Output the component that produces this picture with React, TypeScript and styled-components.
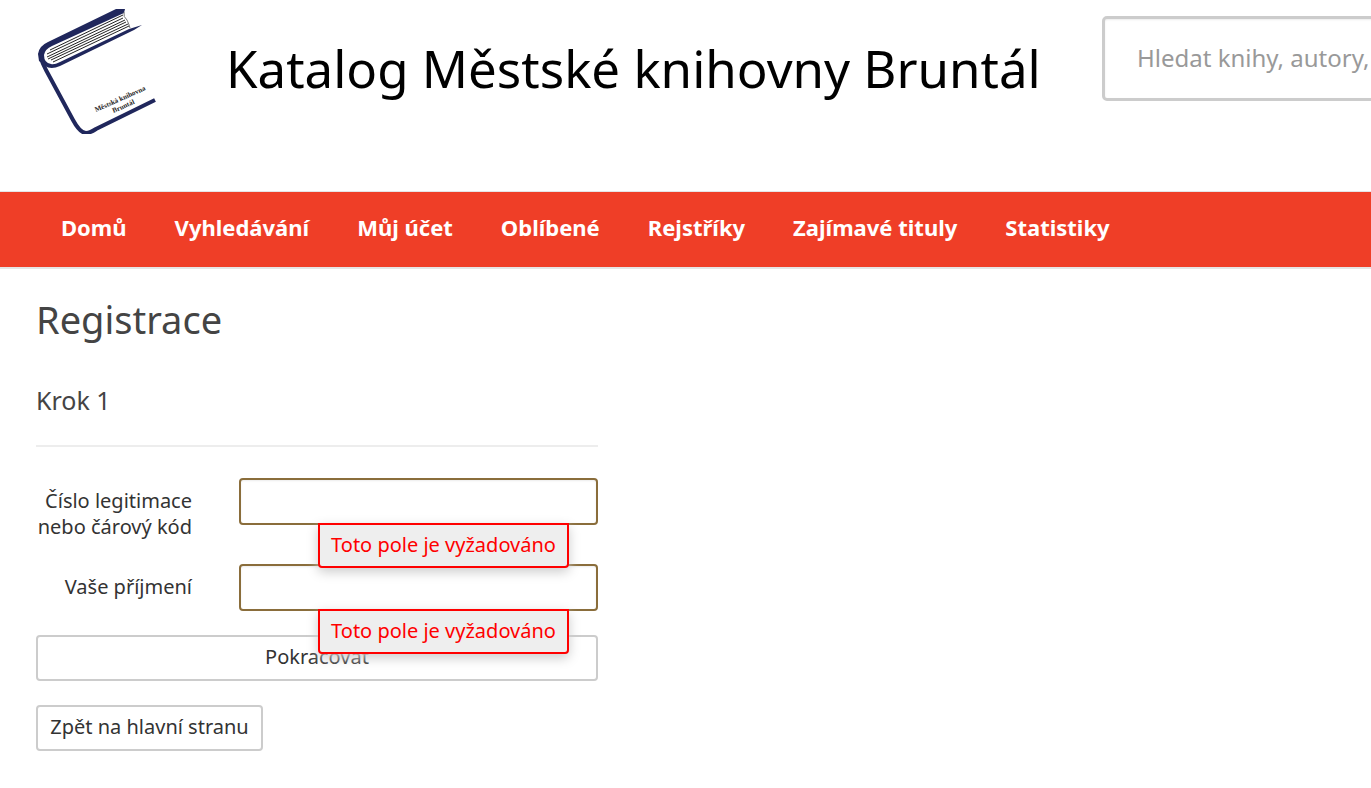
import React from "react";
import styled, { createGlobalStyle } from "styled-components";

const GlobalStyle = createGlobalStyle`
  *, *::before, *::after { box-sizing: border-box; }
  body {
    margin: 0;
    background: #fff;
    color: #333;
    font-family: "Noto Sans", sans-serif;
    font-size: 20px;
    line-height: 26px;
    overflow-x: hidden;
  }
  button, input { font: inherit; color: inherit; }
`;

const Header = styled.header`
  display: flex;
  align-items: flex-start;
  min-height: 191px;
  padding: 9px 0 0 36px;
  overflow: hidden;
`;

const LogoLink = styled.a`
  flex: none;
  width: 190px;

  svg { display: block; }
`;

const SiteTitle = styled.p`
  flex: none;
  width: 876px;
  margin: 0;
  padding-top: 24px;
  color: #000;
  font-size: 51px;
  line-height: 70px;
  white-space: nowrap;
`;

const SearchForm = styled.form`
  flex: none;
  width: 480px;
  padding-top: 7px;
`;

const SearchInput = styled.input`
  display: block;
  width: 100%;
  height: 85px;
  padding: 0 32px 2px;
  border: 3px solid #ccc;
  border-radius: 5px;
  background: #fff;
  box-shadow: inset 0 1px 2px rgba(0, 0, 0, 0.08);
  font-size: 24px;

  &::placeholder { color: #999; opacity: 1; }
`;

const Nav = styled.nav`
  border-top: 1px solid #e5e5e5;
  border-bottom: 2px solid #e5e5e5;
  background: #ef3e27;
`;

const NavList = styled.ul`
  display: flex;
  gap: 48px;
  margin: 0;
  padding: 0 61px;
  list-style: none;
`;

const NavLink = styled.a`
  display: block;
  padding: 20px 0 25px;
  color: #fff;
  font-size: 22px;
  font-weight: 700;
  line-height: 30px;
  text-decoration: none;
  white-space: nowrap;
`;

const Main = styled.main`
  max-width: 598px;
  padding: 23px 0 36px 36px;
`;

const PageHeading = styled.h1`
  margin: 0 0 36px;
  color: #444;
  font-size: 38px;
  font-weight: 400;
  line-height: 54px;
`;

const StepHeading = styled.h2`
  margin: 0 0 31px;
  padding-bottom: 27px;
  border-bottom: 2px solid #ededed;
  color: #444;
  font-size: 25px;
  font-weight: 400;
  line-height: 36px;
`;

const FieldRow = styled.div`
  display: grid;
  grid-template-columns: 156px minmax(0, 1fr);
  column-gap: 47px;
  align-items: start;
  margin-bottom: 24px;
`;

const Label = styled.label`
  padding-top: 10px;
  text-align: right;
`;

const Control = styled.div`
  position: relative;
`;

const TextInput = styled.input`
  display: block;
  width: 100%;
  height: 47px;
  padding: 0 12px;
  border: 2px solid #8a6d3b;
  border-radius: 4px;
  background: #fff;
  box-shadow: inset 0 1px 2px rgba(0, 0, 0, 0.08);
`;

const FieldError = styled.div`
  position: absolute;
  top: 45px;
  right: 29px;
  z-index: 1;
  width: 251px;
  padding: 8px 0 9px;
  border: 2px solid #f00;
  border-radius: 0 0 4px 4px;
  background: #eee;
  box-shadow: 0 4px 12px #ccc;
  color: #f00;
  line-height: 24px;
  text-align: center;
  white-space: nowrap;
`;

const Button = styled.button<{ $block?: boolean }>`
  display: block;
  width: ${({ $block }) => ($block ? "100%" : "227px")};
  height: 46px;
  margin: 0 0 24px;
  padding: 0 0 2px;
  border: 2px solid #ccc;
  border-radius: 4px;
  background: #fff;
  cursor: pointer;
  text-align: center;
  white-space: nowrap;
`;

const navItems = [
  "Domů",
  "Vyhledávání",
  "Můj účet",
  "Oblíbené",
  "Rejstříky",
  "Zajímavé tituly",
  "Statistiky",
];

const fields = [
  { id: "card", label: "Číslo legitimace nebo čárový kód" },
  { id: "surname", label: "Vaše příjmení" },
];

function BookLogo() {
  return (
    <svg width="126" height="125" viewBox="0 0 126 125" aria-hidden="true">
      <path
        d="M80 0H89L88 4L16 37Q9 40 8 46Q8 54 15 55Q18 56 24 53L93 20L106 16L98 21L24 57Q15 61 9 57L3 52L2 45Q3 37 12 33Z"
        fill="#20275c"
      />
      <path d="M88 3Q87 8 91 11Q93 15 94 19" fill="none" stroke="#777" strokeWidth="1" />
      <path
        d="M5 48Q6 54 10 61L37 111Q44 124 50 124Q54 124 60 120L119 91"
        fill="none"
        stroke="#20275c"
        strokeWidth="4"
      />
      <path
        d="M14 41L87 6M11 45L87 9M11 48L89 11M12 50L90 13M15 51L92 15M17 53L93 17"
        fill="none"
        stroke="#222"
        strokeWidth="1"
      />
      <g
        transform="translate(85 92) rotate(-24)"
        fill="#222"
        fontFamily="Liberation Serif, serif"
        fontSize="7"
        fontWeight="700"
        textAnchor="middle"
      >
        <text x="0" y="0">Městská knihovna</text>
        <text x="0" y="8">Bruntál</text>
      </g>
    </svg>
  );
}

export default function App() {
  return (
    <>
      <GlobalStyle />
      <Header>
        <LogoLink href="#" aria-label="Městská knihovna Bruntál">
          <BookLogo />
        </LogoLink>
        <SiteTitle>Katalog Městské knihovny Bruntál</SiteTitle>
        <SearchForm role="search">
          <SearchInput type="search" aria-label="Hledat" placeholder="Hledat knihy, autory, témata" />
        </SearchForm>
      </Header>
      <Nav>
        <NavList>
          {navItems.map((item) => (
            <li key={item}>
              <NavLink href="#">{item}</NavLink>
            </li>
          ))}
        </NavList>
      </Nav>
      <Main>
        <PageHeading>Registrace</PageHeading>
        <form noValidate>
          <StepHeading>Krok 1</StepHeading>
          {fields.map(({ id, label }) => (
            <FieldRow key={id}>
              <Label htmlFor={id}>{label}</Label>
              <Control>
                <TextInput id={id} type="text" aria-invalid="true" aria-describedby={`${id}-error`} />
                <FieldError id={`${id}-error`}>Toto pole je vyžadováno</FieldError>
              </Control>
            </FieldRow>
          ))}
          <Button type="submit" $block>Pokračovat</Button>
        </form>
        <Button type="button">Zpět na hlavní stranu</Button>
      </Main>
    </>
  );
}
